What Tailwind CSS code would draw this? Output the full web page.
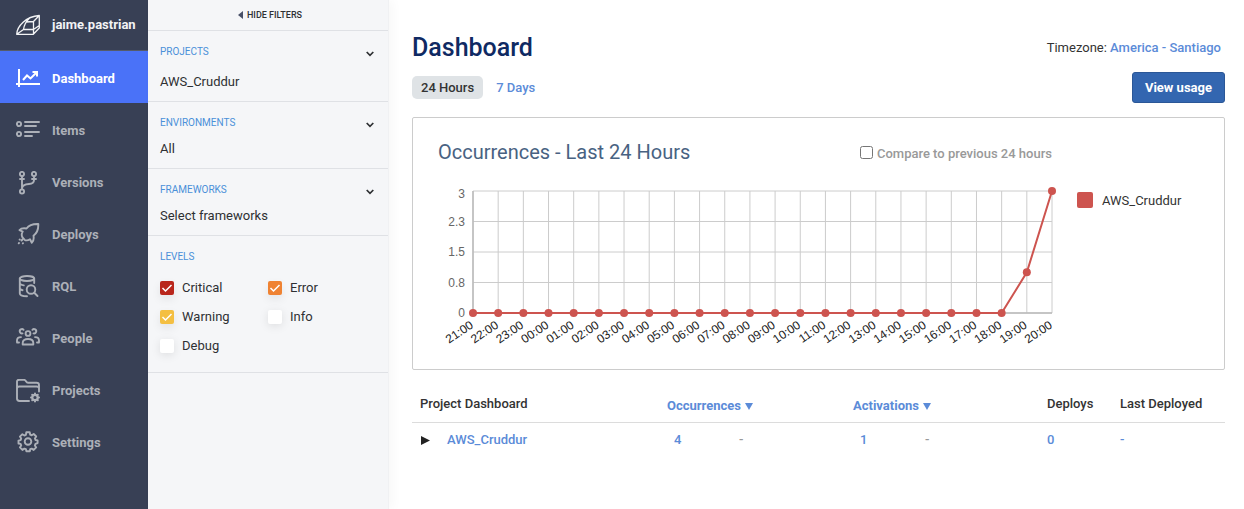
<!DOCTYPE html>
<html lang="en">
<head>
<meta charset="utf-8">
<meta name="viewport" content="width=device-width, initial-scale=1">
<title>Dashboard</title>
<script src="https://cdn.jsdelivr.net/npm/@tailwindcss/browser@4"></script>
</head>
<body class="flex min-h-screen bg-white font-['Roboto',sans-serif] text-sm text-[#333]">

<nav class="w-[148px] shrink-0 bg-[#384055] text-[13px] font-bold text-[#acb0b8]">
  <a href="#" class="flex h-[51px] items-center gap-3 border-b border-[#555b6b] pl-4 text-[#f2f3f5]">
    <svg class="size-6 shrink-0" viewBox="0 0 24 24" fill="none" stroke="currentColor" stroke-width="1.3" stroke-linejoin="round"><path d="M.7 21.300C1 13 10 3.500 23.300 2.500V15l-6 6.300H.7ZM.7 21.300 7.500 16.500h10M7.500 16.500C8 12 10 8.500 14 4.500M17.500 8.500V21M10 9l7.500-.5 5.800-6M17.500 16.500l5.800-4"/></svg>
    <span>jaime.pastrian</span>
  </a>
  <a href="#" class="flex h-[52px] items-center gap-3 bg-[#4a72f8] pt-1 pl-4 text-white">
    <svg class="size-6 shrink-0" viewBox="0 0 24 24" fill="none" stroke="currentColor" stroke-width="2"><path d="M3 2v18M0 17h24M7 13l4-4.500 3.500 3L20 6" /><path d="M16.500 5h4.500v4.500" stroke-width="2"/></svg>
    <span>Dashboard</span>
  </a>
  <a href="#" class="flex h-[52px] items-center gap-3 pt-1 pl-4">
    <svg class="size-6 shrink-0" viewBox="0 0 24 24" fill="none" stroke="currentColor" stroke-width="1.900" stroke-linecap="round"><circle cx="3" cy="5" r="2.100"/><circle cx="3" cy="15" r="2.100"/><path d="M9 3h14M9 7h11M9 13h14M9 17h7"/></svg>
    <span>Items</span>
  </a>
  <a href="#" class="flex h-[52px] items-center gap-3 pt-1 pl-4">
    <svg class="size-6 shrink-0" viewBox="0 0 24 24" fill="none" stroke="currentColor" stroke-width="1.900" stroke-linecap="round"><circle cx="6" cy="3" r="2.100"/><circle cx="18" cy="3" r="2.100"/><circle cx="6" cy="20.500" r="2.100"/><path d="M6 5.500v13M4 8h4M16 8h4M18 5.500V9c0 3-2 3.800-5 4-4 .3-6.500 1-7 4"/></svg>
    <span>Versions</span>
  </a>
  <a href="#" class="flex h-[52px] items-center gap-3 pt-1 pl-4">
    <svg class="size-6 shrink-0" viewBox="0 0 24 24" fill="none" stroke="currentColor" stroke-width="1.900" stroke-linejoin="round" stroke-linecap="round"><path d="M22.300 1C16.500.8 13 2 10.500 5.500c-3-.5-5.500-.2-7 1.600l3.200 1.500c-1.200 2-1.300 4-.2 5.900l2 2.200c1.500 1 3.500.8 5.500-.5l1.800 3.500c1.800-1.500 2.200-4 1.700-7 4-3 5-6.500 4.800-11.700Z"/><path d="M6.500 16.500l-1 1M3 20l-.3.300M7 20.200l-.2.200M3.800 16.500l-.2.100"/></svg>
    <span>Deploys</span>
  </a>
  <a href="#" class="flex h-[52px] items-center gap-3 pt-1 pl-4">
    <svg class="size-6 shrink-0" viewBox="0 0 24 24" fill="none" stroke="currentColor" stroke-width="1.900" stroke-linecap="round"><ellipse cx="11" cy="3.500" rx="7.200" ry="2.500"/><path d="M3.800 3.500v15c0 1.800 3 2.700 7.200 2.700M18.200 3.500V8M3.800 8.500c.8 1.200 2.200 1.700 4 1.900M3.800 13.500c.6 1 1.500 1.500 2.800 1.700"/><circle cx="15" cy="14.500" r="4.300"/><path d="M18.500 18l3 3"/></svg>
    <span>RQL</span>
  </a>
  <a href="#" class="flex h-[52px] items-center gap-3 pt-1 pl-4">
    <svg class="size-6 shrink-0" viewBox="0 0 24 24" fill="none" stroke="currentColor" stroke-width="1.900" stroke-linecap="round" stroke-linejoin="round"><circle cx="12" cy="6.500" r="2.400"/><path d="M6.700 17.500V16c0-2.700 2-4 5.300-4s5.300 1.300 5.300 4v1.500ZM6.500 6.400A2.200 2.200 0 1 1 7.600 2.800M17.500 6.400a2.200 2.200 0 1 0-1.100-3.600M1 15v-1.500c0-2 1.500-3.400 4-3.400M3 15.500H1M23 15v-1.500c0-2-1.500-3.400-4-3.400M21 15.500h2"/></svg>
    <span>People</span>
  </a>
  <a href="#" class="flex h-[52px] items-center gap-3 pt-1 pl-4">
    <svg class="size-6 shrink-0" viewBox="0 0 24 24" fill="none" stroke="currentColor" stroke-width="1.900" stroke-linecap="round"><path d="M13 22H3.500A2.500 2.500 0 0 1 1 19.500V2.500C1 1 2 0.800 3.500.8H8c2.300 0 1.700 3 4 3h8.500C22 3.800 23 4.500 23 6v6.500M1 9.500c0-1.500 1-2 2.500-2h17c1.500 0 2.500.5 2.500 2"/><circle cx="19" cy="18.500" r="2.700" stroke-width="2.200"/><path d="M19 15v-.5M19 22v.5M15.500 18.500H15M22.500 18.500h.5M16.500 16l-.3-.3M21.500 16l.3-.3M16.500 21l-.3.300M21.500 21l.3.300" stroke-width="2"/></svg>
    <span>Projects</span>
  </a>
  <a href="#" class="flex h-[52px] items-center gap-3 pt-1 pl-4">
    <svg class="size-6 shrink-0" viewBox="0 0 24 24" fill="none" stroke="currentColor" stroke-width="1.900" stroke-linejoin="round"><g transform="translate(0 -1)"><circle cx="12" cy="11.500" r="3.300"/><path d="M10.300 2.300h3.400l.5 2.400 1.500.6 2-1.300 2.500 2.500-1.300 2 .6 1.500 2.100.4v2.700l-2.100.8-.6 1.500 1.300 2-2.500 2.500-2-1.300-1.500.6-.4 2h-3.400l-.5-2-1.500-.6-2 1.300-2.500-2.500 1.300-2-.6-1.500-2.100-.4v-2.900l2.100-.5.6-1.500-1.300-2 2.500-2.400 2 1.300 1.500-.6Z"/></g></svg>
    <span>Settings</span>
  </a>
</nav>

<aside class="w-[241px] shrink-0 border-r border-[#f0f1f3] bg-[#f5f6f8] text-[13px] text-[#2e3033] shadow-[4px_0_10px_rgba(0,0,0,0.03)]">
  <button type="button" class="flex h-[31px] w-full items-center justify-center gap-1 border-b border-[#dfe1e5] pl-1 text-[9px] font-medium">
    <svg class="h-2 w-[5px]" viewBox="0 0 5 8" fill="#485068"><path d="M5 0v8L0 4Z"/></svg>HIDE FILTERS
  </button>
  <section class="h-[71px] border-b border-[#dfe1e5] px-3 pt-[13px]">
    <button type="button" class="flex h-4 w-full items-center justify-between text-[10px] text-[#4a90d9]">PROJECTS
      <svg class="mt-1 mr-[2px] h-[6px] w-2" viewBox="0 0 8 6" fill="none" stroke="#2e3033" stroke-width="1.700"><path d="M.7 1 4 4.300 7.300 1"/></svg></button>
    <p class="mt-[13px] leading-[18px]">AWS_Cruddur</p>
  </section>
  <section class="h-[67px] border-b border-[#dfe1e5] px-3 pt-[13px]">
    <button type="button" class="flex h-4 w-full items-center justify-between text-[10px] text-[#4a90d9]">ENVIRONMENTS
      <svg class="mt-1 mr-[2px] h-[6px] w-2" viewBox="0 0 8 6" fill="none" stroke="#2e3033" stroke-width="1.700"><path d="M.7 1 4 4.300 7.300 1"/></svg></button>
    <p class="mt-[9px] leading-[18px]">All</p>
  </section>
  <section class="h-[67px] border-b border-[#dfe1e5] px-3 pt-[13px]">
    <button type="button" class="flex h-4 w-full items-center justify-between text-[10px] text-[#4a90d9]">FRAMEWORKS
      <svg class="mt-1 mr-[2px] h-[6px] w-2" viewBox="0 0 8 6" fill="none" stroke="#2e3033" stroke-width="1.700"><path d="M.7 1 4 4.300 7.300 1"/></svg></button>
    <p class="mt-[9px] leading-[18px]">Select frameworks</p>
  </section>
  <fieldset class="border-b border-[#dfe1e5] px-3 pt-[13px] pb-[11px]">
    <legend class="float-left w-full text-[10px] leading-4 text-[#4a90d9]">LEVELS</legend>
    <div class="clear-both grid grid-cols-2 pt-[9px]">
      <label class="flex h-[29px] items-center gap-2 pb-px"><span class="relative size-[14px]"><input type="checkbox" checked class="block size-[14px] appearance-none rounded-[2px] bg-[#b9261c] shadow-[0_4px_10px_rgba(0,0,0,0.08)]"><svg class="pointer-events-none absolute inset-0" viewBox="0 0 14 14" fill="none" stroke="#fff" stroke-width="1.500"><path d="M2.500 7 5.500 10 11.500 4"/></svg></span>Critical</label>
      <label class="flex h-[29px] items-center gap-2 pb-px"><span class="relative size-[14px]"><input type="checkbox" checked class="block size-[14px] appearance-none rounded-[2px] bg-[#ef8232] shadow-[0_4px_10px_rgba(0,0,0,0.08)]"><svg class="pointer-events-none absolute inset-0" viewBox="0 0 14 14" fill="none" stroke="#fff" stroke-width="1.500"><path d="M2.500 7 5.500 10 11.500 4"/></svg></span>Error</label>
      <label class="flex h-[29px] items-center gap-2 pb-px"><span class="relative size-[14px]"><input type="checkbox" checked class="block size-[14px] appearance-none rounded-[2px] bg-[#f4bf42] shadow-[0_4px_10px_rgba(0,0,0,0.08)]"><svg class="pointer-events-none absolute inset-0" viewBox="0 0 14 14" fill="none" stroke="#fff" stroke-width="1.500"><path d="M2.500 7 5.500 10 11.500 4"/></svg></span>Warning</label>
      <label class="flex h-[29px] items-center gap-2 pb-px"><input type="checkbox" class="size-[14px] appearance-none rounded-[2px] bg-white shadow-[0_2px_10px_rgba(0,0,0,0.1)]">Info</label>
      <label class="flex h-[29px] items-center gap-2 pb-px"><input type="checkbox" class="size-[14px] appearance-none rounded-[2px] bg-white shadow-[0_2px_10px_rgba(0,0,0,0.1)]">Debug</label>
    </div>
  </fieldset>
</aside>

<main class="min-w-0 flex-1 pt-8 pr-[19px] pl-[23px]">
  <header class="flex h-8 items-center justify-between">
    <h1 class="text-[25px] font-medium text-[#0f2a63]">Dashboard</h1>
    <p class="pt-px pr-1 text-[13px]">Timezone: <a href="#" class="font-medium text-[#5b8bd8]">America - Santiago</a></p>
  </header>
  <div class="mt-[7px] flex h-8 items-center justify-between text-[13px] font-medium">
    <div class="flex items-center gap-[13px]">
      <button type="button" class="h-[23px] rounded-[5px] bg-[#dfe3e6] px-[9px] pt-[2px] font-medium text-[#333]">24 Hours</button>
      <button type="button" class="pt-[2px] font-medium text-[#5b8bd8]">7 Days</button>
    </div>
    <button type="button" class="h-[31px] rounded-[3px] border border-[#2b5797] bg-[#3366b0] px-3 pt-[2px] font-bold text-white">View usage</button>
  </div>

  <section class="mt-[14px] flex h-[253px] rounded-[2px] border border-[#ccc] pt-5 pl-[25px]">
    <div class="min-w-0 flex-1">
      <div class="flex h-7 items-center justify-between pr-[10px]">
        <h2 class="text-xl text-[#486282]">Occurrences - Last 24 Hours</h2>
        <label class="flex items-center gap-1 text-[13px] font-medium text-[#999]"><input type="checkbox" class="size-[13px]"><span class="pt-1">Compare to previous 24 hours</span></label>
      </div>
      <svg id="chart" class="mt-3 block w-full" viewBox="0 0 624 180" role="img" aria-label="Occurrences per hour"></svg>
    </div>
    <div class="flex w-[162px] shrink-0 gap-[9px] pt-[54px] pl-[15px] text-[13px] leading-4"><span class="size-4 rounded-[2px] bg-[#cd544f]"></span><span class="pt-px">AWS_Cruddur</span></div>
  </section>

  <table class="mt-[15px] w-full table-fixed text-left text-[13px]">
    <colgroup><col class="w-[247px]"><col class="w-[72px]"><col class="w-[114px]"><col class="w-[72px]"><col class="w-[122px]"><col class="w-[73px]"><col class="w-[113px]"></colgroup>
    <thead class="border-b border-[#dcdcdc]">
      <tr class="h-[37px]">
        <th class="pt-[2px] pl-2 font-medium">Project Dashboard</th>
        <th colspan="2" class="pt-[6px] pl-2 font-medium"><button type="button" class="flex items-center gap-1 font-bold text-[#5b8bd8]">Occurrences<svg class="h-[7px] w-2" viewBox="0 0 8 7" fill="currentColor"><path d="M0 0h8L4 7Z"/></svg></button></th>
        <th colspan="2" class="pt-[6px] pl-2 font-medium"><button type="button" class="flex items-center gap-1 font-bold text-[#5b8bd8]">Activations<svg class="h-[7px] w-2" viewBox="0 0 8 7" fill="currentColor"><path d="M0 0h8L4 7Z"/></svg></button></th>
        <th class="pt-[2px] pl-2 font-medium">Deploys</th>
        <th class="pt-[2px] pl-2 font-medium">Last Deployed</th>
      </tr>
    </thead>
    <tbody class="font-medium text-[#5b8bd8]">
      <tr class="h-9">
        <td class="pl-[9px]"><div class="flex items-center gap-[17px]"><button type="button" aria-label="Expand" class="text-[#222]"><svg class="block h-[9px] w-[9px]" viewBox="0 0 9 9" fill="currentColor"><path d="M0 0v9l9-4.500Z"/></svg></button><a href="#">AWS_Cruddur</a></div></td>
        <td class="pl-[15px]"><a href="#">4</a></td><td class="pl-2 text-[#999]">-</td>
        <td class="pl-[15px]"><a href="#">1</a></td><td class="pl-2 text-[#999]">-</td>
        <td class="pl-2"><a href="#">0</a></td><td class="pl-2"><a href="#">-</a></td>
      </tr>
    </tbody>
  </table>
</main>

<script>
  const hours = Array.from({ length: 24 }, (_, i) => String((21 + i) % 24).padStart(2, '0') + ':00');
  const values = hours.map((h, i) => (i === 23 ? 3 : i === 22 ? 1 : 0));
  const x0 = 35, x1 = 614, y0 = 135, y1 = 13;
  const px = (i) => x0 + (i * (x1 - x0)) / 23;
  const py = (v) => y0 - (v * (y0 - y1)) / 3;
  let out = '';
  ['0', '0.8', '1.5', '2.3', '3'].forEach((t, i) => {
    const y = py(i * 0.75);
    out += `<path d="M${x0} ${y}H${x1}" stroke="#ccc"/><text x="27" y="${i === 4 ? y + 7 : y + 4}" text-anchor="end" font-size="12" fill="#666">${t}</text>`;
  });
  hours.forEach((h, i) => {
    out += `<path d="M${px(i)} ${y1}V${y0}" stroke="#ccc"/><text transform="translate(${px(i) + 1} 149) rotate(-34)" text-anchor="end" font-size="12" fill="#222">${h}</text>`;
  });
  out += `<path d="M${x0} ${y1}V${y0}H${x1}" fill="none" stroke="#bbb" stroke-width="1.500"/>`;
  out += `<polyline points="${values.map((v, i) => px(i) + ',' + py(v)).join(' ')}" fill="none" stroke="#cd544f" stroke-width="2"/>`;
  values.forEach((v, i) => { out += `<circle cx="${px(i)}" cy="${py(v)}" r="4" fill="#cd544f"/>`; });
  const chart = document.getElementById('chart');
  chart.setAttribute('font-family', 'Liberation Sans, sans-serif');
  chart.innerHTML = out;
</script>
</body>
</html>
